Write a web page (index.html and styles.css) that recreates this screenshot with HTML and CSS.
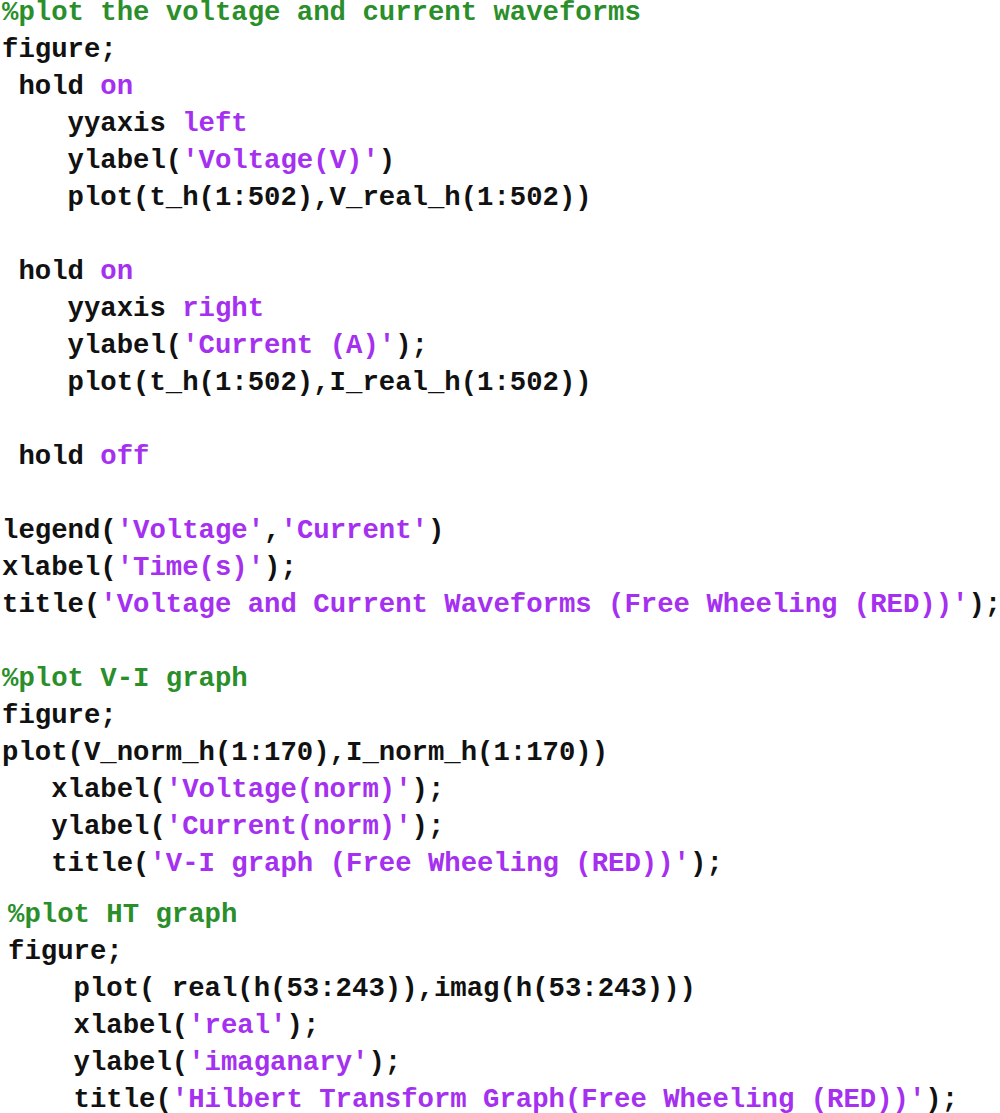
FILE: index.html
```html
<!DOCTYPE html>
<html>
<head>
<meta charset="utf-8">
<link rel="stylesheet" href="styles.css">
</head>
<body>
<pre class="code"><span class="c">%plot the voltage and current waveforms</span>
figure;
 hold <span class="s">on</span>
    yyaxis <span class="s">left</span>
    ylabel(<span class="s">'Voltage(V)'</span>)
    plot(t_h(1:502),V_real_h(1:502))

 hold <span class="s">on</span>
    yyaxis <span class="s">right</span>
    ylabel(<span class="s">'Current (A)'</span>);
    plot(t_h(1:502),I_real_h(1:502))

 hold <span class="s">off</span>

legend(<span class="s">'Voltage'</span>,<span class="s">'Current'</span>)
xlabel(<span class="s">'Time(s)'</span>);
title(<span class="s">'Voltage and Current Waveforms (Free Wheeling (RED))'</span>);

<span class="c">%plot V-I graph</span>
figure;
plot(V_norm_h(1:170),I_norm_h(1:170))
   xlabel(<span class="s">'Voltage(norm)'</span>);
   ylabel(<span class="s">'Current(norm)'</span>);
   title(<span class="s">'V-I graph (Free Wheeling (RED))'</span>);</pre>
<pre class="code code-ht"><span class="c">%plot HT graph</span>
figure;
    plot( real(h(53:243)),imag(h(53:243)))
    xlabel(<span class="s">'real'</span>);
    ylabel(<span class="s">'imaganary'</span>);
    title(<span class="s">'Hilbert Transform Graph(Free Wheeling (RED))'</span>);</pre>
</body>
</html>
```
FILE: styles.css
```css
html, body {
  margin: 0;
  padding: 0;
  background: #ffffff;
  overflow: hidden;
}
.code {
  margin: -6px 0 0 2px;
  font-family: "Liberation Mono", "Courier New", monospace;
  font-weight: bold;
  font-size: 27.3px;
  line-height: 37px;
  color: #111111;
  white-space: pre;
}
.code-ht {
  margin: 14px 0 0 8px;
}
.c {
  color: #2a8f2a;
}
.s {
  color: #a530f0;
}
```
